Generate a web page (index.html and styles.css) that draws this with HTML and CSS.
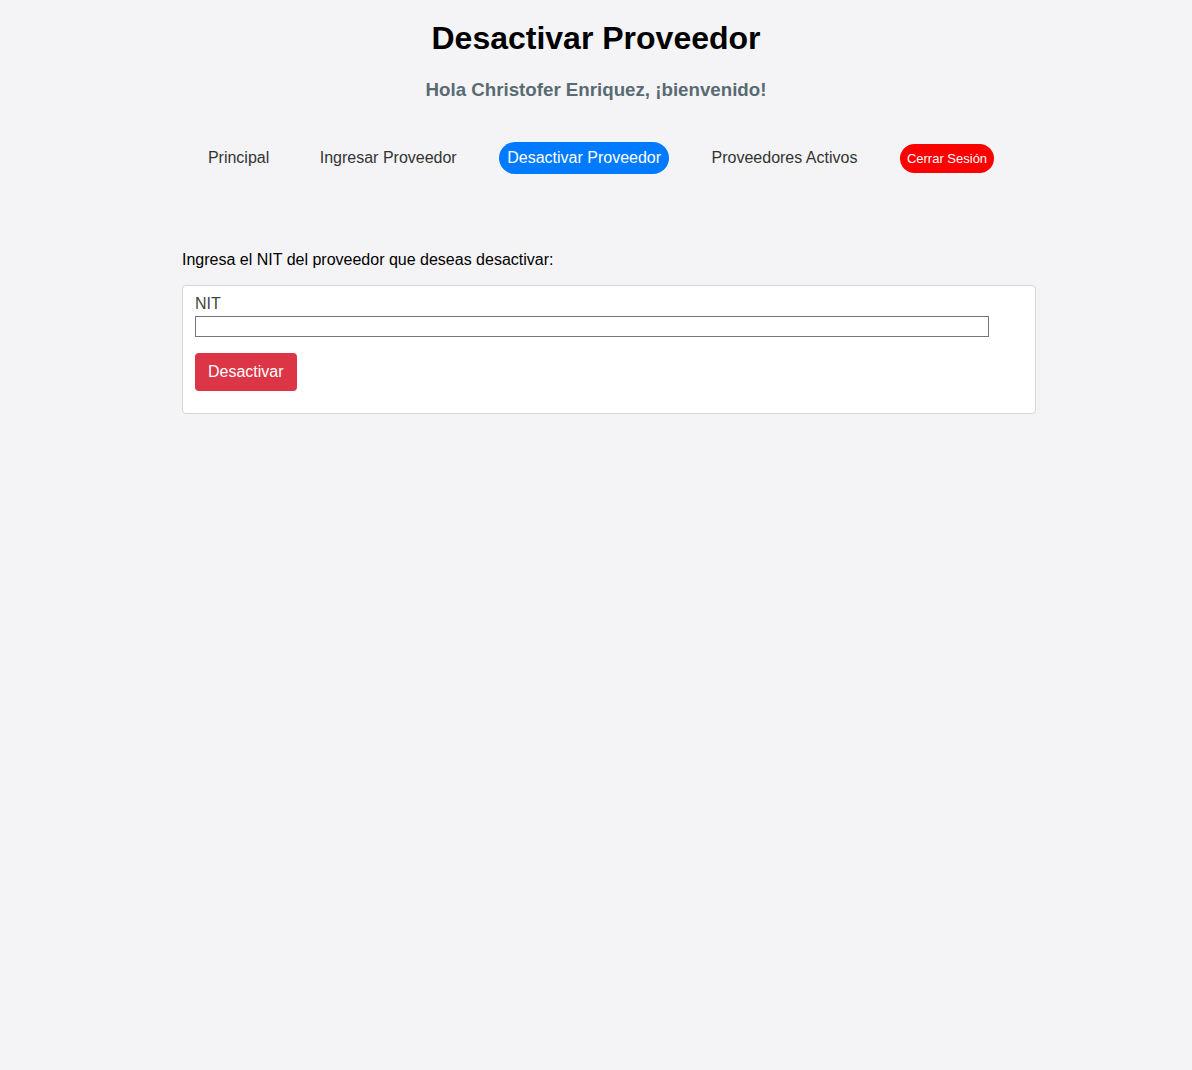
FILE: index.html
```html
<!DOCTYPE html>
<html lang="es">
<head>
<meta charset="utf-8">
<title>Desactivar Proveedor</title>
<link rel="stylesheet" href="styles.css">
</head>
<body>
<header class="header">
  <h1 class="title">Desactivar Proveedor</h1>
  <h2 class="greeting">Hola Christofer Enriquez, ¡bienvenido!</h2>
  <nav class="nav">
    <a class="nav-link" href="#">Principal</a>
    <a class="nav-link" href="#">Ingresar Proveedor</a>
    <a class="nav-link active" href="#">Desactivar Proveedor</a>
    <a class="nav-link" href="#">Proveedores Activos</a>
    <button class="logout" type="button">Cerrar Sesión</button>
  </nav>
</header>
<main class="content">
  <p class="intro">Ingresa el NIT del proveedor que deseas desactivar:</p>
  <form class="card">
    <label class="label" for="nit">NIT</label>
    <input class="input" id="nit" type="text">
    <button class="btn-danger" type="button">Desactivar</button>
  </form>
</main>
</body>
</html>
```
FILE: styles.css
```css
html, body {
  margin: 0;
  padding: 0;
}
body {
  background: #f4f4f6;
  font-family: "Liberation Sans", Arial, sans-serif;
  color: #000;
}
.header {
  text-align: center;
  padding-top: 1px;
}
.title {
  font-size: 32px;
  font-weight: bold;
  margin: 19px 0 0;
  line-height: 37px;
}
.greeting {
  font-size: 18.72px;
  font-weight: bold;
  color: #5a6a73;
  margin: 22px 0 0;
  line-height: 22px;
}
.nav {
  display: flex;
  justify-content: center;
  align-items: center;
  gap: 34.5px;
  margin-top: 41px;
  padding-left: 2px;
}
.nav-link {
  font-size: 16px;
  color: #333;
  text-decoration: none;
  padding: 7px 8px;
  line-height: 18px;
  border-radius: 16px;
}
.nav-link.active {
  background: #007bff;
  color: #fff;
}
.logout {
  font-family: "Liberation Sans", Arial, sans-serif;
  font-size: 13px;
  color: #fff;
  background: #ff0000;
  border: none;
  border-radius: 15px;
  padding: 6px 7px;
  line-height: 17px;
}
.content {
  width: 854px;
  margin: 77px 0 0 182px;
}
.intro {
  font-size: 16px;
  margin: 0 0 16px;
  line-height: 18px;
}
.card {
  background: #fff;
  border: 1px solid #d6d6d9;
  border-radius: 4px;
  padding: 9px 12px 22px;
  display: flex;
  flex-direction: column;
  align-items: flex-start;
}
.label {
  font-size: 16px;
  color: #444;
  line-height: 18px;
  margin-bottom: 3px;
}
.input {
  width: 794px;
  height: 21px;
  box-sizing: border-box;
  border: 1px solid #767676;
  border-radius: 0;
  padding: 1px 2px;
  margin: 0 0 16px;
  background: #fff;
}
.btn-danger {
  font-family: "Liberation Sans", Arial, sans-serif;
  font-size: 16px;
  color: #fff;
  background: #dc3545;
  border: none;
  border-radius: 4px;
  height: 38px;
  padding: 0 13px;
}
```
